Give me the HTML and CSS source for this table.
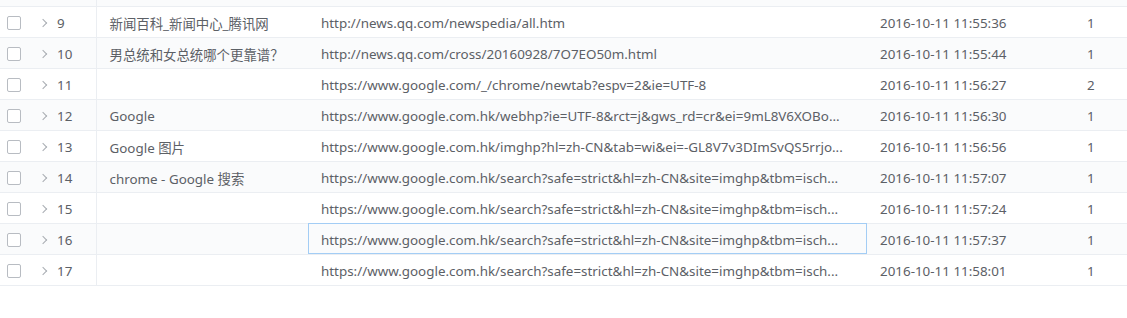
FILE: index.html
```html
<!DOCTYPE html>
<html>
<head>
<meta charset="utf-8">
<link rel="stylesheet" href="styles.css">
</head>
<body>
<div class="viewport">
<table class="grid">
  <colgroup>
    <col class="c-idx"><col class="c-title"><col class="c-url"><col class="c-time"><col class="c-count">
  </colgroup>
  <tbody>
    <tr class="stripe"><td class="idx"><span class="cb"></span><span class="arrow"></span><span class="num">8</span></td><td>新闻中心_腾讯网</td><td>http://news.qq.com/</td><td>2016-10-11 11:55:30</td><td>1</td></tr>
    <tr><td class="idx"><span class="cb"></span><span class="arrow"></span><span class="num">9</span></td><td>新闻百科_新闻中心_腾讯网</td><td>http://news.qq.com/newspedia/all.htm</td><td>2016-10-11 11:55:36</td><td>1</td></tr>
    <tr class="stripe"><td class="idx"><span class="cb"></span><span class="arrow"></span><span class="num">10</span></td><td>男总统和女总统哪个更靠谱？</td><td>http://news.qq.com/cross/20160928/7O7EO50m.html</td><td>2016-10-11 11:55:44</td><td>1</td></tr>
    <tr><td class="idx"><span class="cb"></span><span class="arrow"></span><span class="num">11</span></td><td></td><td>https://www.google.com/_/chrome/newtab?espv=2&amp;ie=UTF-8</td><td>2016-10-11 11:56:27</td><td>2</td></tr>
    <tr class="stripe"><td class="idx"><span class="cb"></span><span class="arrow"></span><span class="num">12</span></td><td>Google</td><td>https://www.google.com.hk/webhp?ie=UTF-8&amp;rct=j&amp;gws_rd=cr&amp;ei=9mL8V6XOBo...</td><td>2016-10-11 11:56:30</td><td>1</td></tr>
    <tr><td class="idx"><span class="cb"></span><span class="arrow"></span><span class="num">13</span></td><td>Google 图片</td><td>https://www.google.com.hk/imghp?hl=zh-CN&amp;tab=wi&amp;ei=-GL8V7v3DImSvQS5rrjo...</td><td>2016-10-11 11:56:56</td><td>1</td></tr>
    <tr class="stripe"><td class="idx"><span class="cb"></span><span class="arrow"></span><span class="num">14</span></td><td>chrome - Google 搜索</td><td>https://www.google.com.hk/search?safe=strict&amp;hl=zh-CN&amp;site=imghp&amp;tbm=isch...</td><td>2016-10-11 11:57:07</td><td>1</td></tr>
    <tr><td class="idx"><span class="cb"></span><span class="arrow"></span><span class="num">15</span></td><td></td><td>https://www.google.com.hk/search?safe=strict&amp;hl=zh-CN&amp;site=imghp&amp;tbm=isch...</td><td>2016-10-11 11:57:24</td><td>1</td></tr>
    <tr class="stripe"><td class="idx"><span class="cb"></span><span class="arrow"></span><span class="num">16</span></td><td></td><td class="focus">https://www.google.com.hk/search?safe=strict&amp;hl=zh-CN&amp;site=imghp&amp;tbm=isch...</td><td>2016-10-11 11:57:37</td><td>1</td></tr>
    <tr><td class="idx"><span class="cb"></span><span class="arrow"></span><span class="num">17</span></td><td></td><td>https://www.google.com.hk/search?safe=strict&amp;hl=zh-CN&amp;site=imghp&amp;tbm=isch...</td><td>2016-10-11 11:58:01</td><td>1</td></tr>
  </tbody>
</table>
</div>
</body>
</html>
```

FILE: styles.css
```css
html, body {
  margin: 0;
  padding: 0;
  background: #ffffff;
}
.viewport {
  width: 1127px;
  height: 318px;
  overflow: hidden;
}
.grid {
  margin-top: -25px;
  width: 1127px;
  border-collapse: collapse;
  table-layout: fixed;
  font-family: "Noto Sans", "Noto Sans CJK SC", sans-serif;
  font-size: 13.4px;
  color: #5c6066;
}
.c-idx { width: 96px; }
.c-title { width: 212px; }
.c-url { width: 559px; }
.c-time { width: 208px; }
.c-count { width: 52px; }
.grid td {
  height: 31px;
  padding: 2px 0 0 13px;
  border-bottom: 1px solid #ebeef2;
  white-space: nowrap;
  overflow: hidden;
  text-overflow: ellipsis;
  box-sizing: border-box;
}
.grid td:last-child { padding-left: 12px; }
.grid tr.stripe td { background: #fafbfc; }
.grid td.idx {
  padding: 1px 0 0 7px;
  border-right: 1px solid #ebeef2;
}
.grid td.focus {
  outline: 1px solid #a3cdf5;
  outline-offset: -1px;
  padding-left: 13px;
}
.idx .cb {
  display: inline-block;
  width: 12px;
  height: 12px;
  border: 1px solid #b8bcc2;
  border-radius: 2px;
  background: #fff;
  vertical-align: middle;
}
.idx .arrow {
  display: inline-block;
  width: 5px;
  height: 5px;
  border-right: 1px solid #a8acb2;
  border-top: 1px solid #a8acb2;
  transform: rotate(45deg);
  margin-left: 19px;
  vertical-align: middle;
}
.idx .num {
  display: inline-block;
  margin-left: 11px;
  vertical-align: middle;
}
```
